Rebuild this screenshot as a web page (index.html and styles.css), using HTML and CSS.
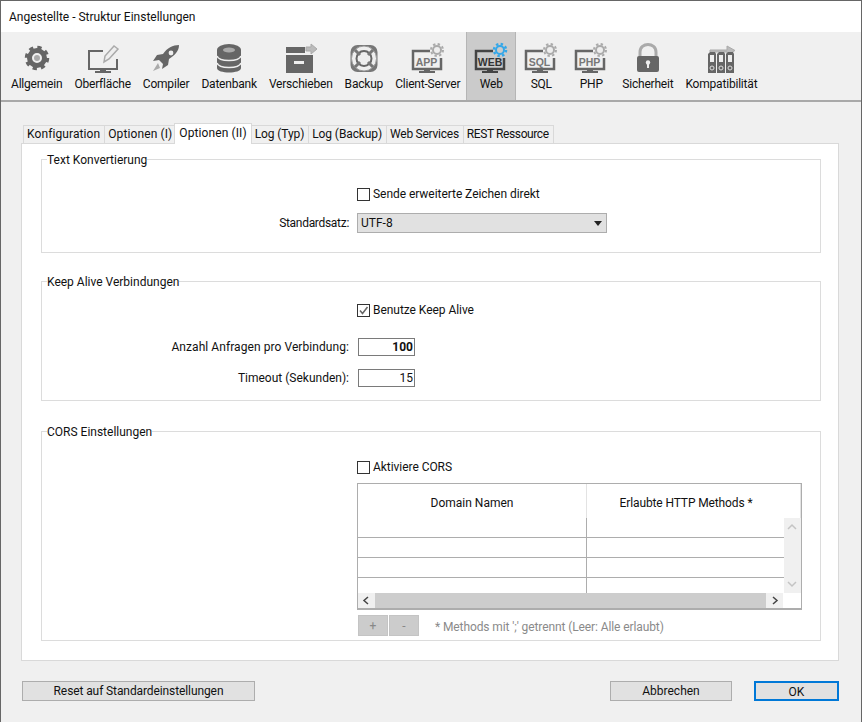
FILE: index.html
```html
<!DOCTYPE html>
<html>
	<head>
		<meta charset="utf-8">
		<title>Angestellte - Struktur Einstellungen</title>
		<link rel="stylesheet" href="styles.css">
	</head>

	<body>
		<div class="window">
			<header class="titlebar">Angestellte - Struktur Einstellungen</header>

			<nav class="toolbar">
				<a class="tool">
					<svg class="tool-icon" viewBox="0 0 40 32">
						<circle cx="20" cy="16" r="7.500" fill="none" stroke="#666" stroke-width="5"/>
						<circle cx="20" cy="16" r="10.500" fill="none" stroke="#666" stroke-width="3.500" stroke-dasharray="4.200 4.050"/>
						<circle cx="20" cy="16" r="3" fill="#aaa"/>
					</svg>
					Allgemein
				</a>
				<a class="tool">
					<svg class="tool-icon" viewBox="0 0 40 32">
						<path d="M20 9H6v18h28V17" fill="none" stroke="#666" stroke-width="2"/>
						<path d="M17 27h6v2h5v2H12v-2h5z" fill="#666"/>
						<path d="M21 20l1-6L31 4l4 3-9 10z" fill="#eee" stroke="#aaa" stroke-width="1.500"/>
					</svg>
					Oberfläche
				</a>
				<a class="tool">
					<svg class="tool-icon" viewBox="0 0 40 32">
						<path d="M33 3c-6 0-12 3-16 9l-6 1-4 6 6-1 4 4-1 5 6-4 1-6c6-4 10-8 10-14z" fill="#666"/>
						<circle cx="25" cy="11" r="2.400" fill="#eee"/>
						<path d="M12 21l-5 8 7-3z" fill="#aaa"/>
					</svg>
					Compiler
				</a>
				<a class="tool">
					<svg class="tool-icon" viewBox="0 0 40 32">
						<path d="M8 8v18c0 6 24 6 24 0V8z" fill="#666"/>
						<ellipse cx="20" cy="8" rx="12" ry="6" fill="#666"/>
						<ellipse cx="20" cy="8" rx="6" ry="2.500" fill="#aaa"/>
						<path d="M8 14c2 6 22 6 24 0M8 21c2 6 22 6 24 0" fill="none" stroke="#eee" stroke-width="1.500"/>
					</svg>
					Datenbank
				</a>
				<a class="tool">
					<svg class="tool-icon" viewBox="0 0 40 32">
						<path d="M5 5h19v6H5zM5 13h27v18H5z" fill="#666"/>
						<path d="M13 19h10v3H13z" fill="#eee"/>
						<path d="M25 5h5V2l6 5-6 5V9h-5z" fill="#bbb" stroke="#aaa"/>
					</svg>
					Verschieben
				</a>
				<a class="tool">
					<svg class="tool-icon" viewBox="0 0 40 32">
						<rect x="6.500" y="3" width="27" height="27" rx="7" fill="#777"/>
						<circle cx="20" cy="16.500" r="12.500" fill="#eee" stroke="#999"/>
						<circle cx="20" cy="16.500" r="7.500" fill="#eee" stroke="#666" stroke-width="2"/>
						<path d="M11 8l5 5M29 8l-5 5M11 25l5-5M29 25l-5-5" stroke="#777" stroke-width="3"/>
					</svg>
					Backup
				</a>
				<a class="tool">
					<svg class="tool-icon" viewBox="0 0 40 32">
						<path d="M22 9H5v18h28V16" fill="none" stroke="#666" stroke-width="2.500"/>
						<path d="M16 27h6v2h5v2H11v-2h5z" fill="#666"/>
						<circle cx="29" cy="8" r="4" fill="#eee" stroke="#aaa" stroke-width="2"/>
						<circle cx="29" cy="8" r="6" fill="none" stroke="#aaa" stroke-width="2" stroke-dasharray="2.400 2.300"/>
						<text class="badge-text" x="18.500" y="24">APP</text>
					</svg>
					Client-Server
				</a>
				<a class="tool tool-active">
					<svg class="tool-icon" viewBox="0 0 40 32">
						<path d="M22 9H5v18h28V16" fill="none" stroke="#444" stroke-width="2.500"/>
						<path d="M16 27h6v2h5v2H11v-2h5z" fill="#444"/>
						<text class="badge-text badge-dark" x="19" y="24">WEB</text>
						<circle cx="29" cy="8" r="4" fill="#cbcbcb" stroke="#35a7e8" stroke-width="2"/>
						<circle cx="29" cy="8" r="6" fill="none" stroke="#35a7e8" stroke-width="2.500" stroke-dasharray="2.400 2.300"/>
					</svg>
					Web
				</a>
				<a class="tool">
					<svg class="tool-icon" viewBox="0 0 40 32">
						<path d="M22 9H5v18h28V16" fill="none" stroke="#666" stroke-width="2.500"/>
						<path d="M16 27h6v2h5v2H11v-2h5z" fill="#666"/>
						<circle cx="29" cy="8" r="4" fill="#eee" stroke="#aaa" stroke-width="2"/>
						<circle cx="29" cy="8" r="6" fill="none" stroke="#aaa" stroke-width="2" stroke-dasharray="2.400 2.300"/>
						<text class="badge-text" x="18.500" y="24">SQL</text>
					</svg>
					SQL
				</a>
				<a class="tool">
					<svg class="tool-icon" viewBox="0 0 40 32">
						<path d="M22 9H5v18h28V16" fill="none" stroke="#666" stroke-width="2.500"/>
						<path d="M16 27h6v2h5v2H11v-2h5z" fill="#666"/>
						<circle cx="29" cy="8" r="4" fill="#eee" stroke="#aaa" stroke-width="2"/>
						<circle cx="29" cy="8" r="6" fill="none" stroke="#aaa" stroke-width="2" stroke-dasharray="2.400 2.300"/>
						<text class="badge-text" x="18.500" y="24">PHP</text>
					</svg>
					PHP
				</a>
				<a class="tool">
					<svg class="tool-icon" viewBox="0 0 40 32">
						<path d="M12 15V10c0-10 16-10 16 0v5" fill="none" stroke="#aaa" stroke-width="3"/>
						<rect x="9" y="14" width="22" height="16" rx="2" fill="#666"/>
						<circle cx="20" cy="20.500" r="2.200" fill="#eee"/>
						<rect x="19" y="21" width="2" height="5" fill="#eee"/>
					</svg>
					Sicherheit
				</a>
				<a class="tool">
					<svg class="tool-icon" viewBox="0 0 40 32">
						<path d="M9 8h17V4l8 4.500-8 4.500v-3H9z" fill="#bbb" stroke="#aaa"/>
						<path d="M7 12l2-2h5l1 2v19H7zM16 12l2-2h5l1 2v19h-8zM25 12l2-2h5l1 2v19h-8z" fill="#666"/>
						<path d="M9 13h4v7H9zM18 13h4v7h-4zM27 13h4v7h-4z" fill="#eee"/>
						<circle cx="11" cy="26" r="2" fill="none" stroke="#ddd"/>
						<circle cx="20" cy="26" r="2" fill="none" stroke="#ddd"/>
						<circle cx="29" cy="26" r="2" fill="none" stroke="#ddd"/>
					</svg>
					Kompatibilität
				</a>
			</nav>

			<main class="content">
				<ul class="tabs">
					<li class="tab tab-first tab-wide">Konfiguration</li>
					<li class="tab tab-wide">Optionen (I)</li>
					<li class="tab tab-active tab-wide">Optionen (II)</li>
					<li class="tab tab-narrow">Log (Typ)</li>
					<li class="tab tab-narrow">Log (Backup)</li>
					<li class="tab tab-web">Web Services</li>
					<li class="tab tab-rest">REST Ressource</li>
				</ul>

				<section class="panel">
					<fieldset class="group group-text">
						<legend>Text Konvertierung</legend>
						<div class="form-row row-check">
							<span></span>
							<label class="check"><span class="check-box"></span>Sende erweiterte Zeichen direkt</label>
						</div>
						<div class="form-row row-select">
							<span class="form-label label-tight">Standardsatz:</span>
							<div class="select">UTF-8<span class="select-arrow"></span></div>
						</div>
					</fieldset>

					<fieldset class="group group-alive">
						<legend>Keep Alive Verbindungen</legend>
						<div class="form-row row-check">
							<span></span>
							<label class="check">
								<span class="check-box">
									<svg viewBox="0 0 11 11"><path d="M2 5.500l2.500 3L9.500 2" fill="none" stroke="#666" stroke-width="1.500"/></svg>
								</span>
								Benutze Keep Alive
							</label>
						</div>
						<div class="form-row row-number">
							<span class="form-label label-wide">Anzahl Anfragen pro Verbindung:</span>
							<div class="number number-strong">100</div>
						</div>
						<div class="form-row row-number">
							<span class="form-label">Timeout (Sekunden):</span>
							<div class="number">15</div>
						</div>
					</fieldset>

					<fieldset class="group group-cors">
						<legend>CORS Einstellungen</legend>
						<div class="form-row row-check">
							<span></span>
							<label class="check"><span class="check-box"></span>Aktiviere CORS</label>
						</div>
						<div class="form-row">
							<span></span>
							<div>
								<div class="grid">
									<div class="grid-head">
										<div class="grid-title">Domain Namen</div>
										<div class="grid-title grid-title-last">Erlaubte HTTP Methods *</div>
									</div>
									<div class="grid-middle">
										<div class="grid-rows">
											<div class="grid-row"><span></span><span></span></div>
											<div class="grid-row"><span></span><span></span></div>
											<div class="grid-row"><span></span><span></span></div>
											<div class="grid-row grid-row-last"><span></span><span></span></div>
										</div>
										<div class="vscroll">
											<svg viewBox="0 0 16 10"><path d="M4 7l4-4 4 4" fill="none" stroke="#c4c4c4" stroke-width="1.500"/></svg>
											<svg viewBox="0 0 16 10"><path d="M4 3l4 4 4-4" fill="none" stroke="#c4c4c4" stroke-width="1.500"/></svg>
										</div>
									</div>
									<div class="hscroll">
										<svg class="hscroll-arrow" viewBox="0 0 17 15"><path d="M10 4l-4 3.500 4 3.500" fill="none" stroke="#444" stroke-width="1.500"/></svg>
										<div class="hscroll-thumb"></div>
										<svg class="hscroll-arrow" viewBox="0 0 17 15"><path d="M7 4l4 3.500-4 3.500" fill="none" stroke="#444" stroke-width="1.500"/></svg>
										<div class="hscroll-corner"></div>
									</div>
								</div>
								<div class="grid-actions">
									<button class="mini-btn">+</button>
									<button class="mini-btn">-</button>
									<span class="grid-note">* Methods mit ';' getrennt (Leer: Alle erlaubt)</span>
								</div>
							</div>
						</div>
					</fieldset>
				</section>

				<footer class="actions">
					<button class="btn btn-reset">Reset auf Standardeinstellungen</button>
					<button class="btn btn-cancel">Abbrechen</button>
					<button class="btn btn-ok">OK</button>
				</footer>
			</main>
		</div>
	</body>
</html>
```

FILE: styles.css
```css
* {
	box-sizing: border-box;
}
html,
body {
	margin: 0;
	height: 100%;
	overflow: hidden;
}
body {
	font-family: Roboto, "Noto Sans", sans-serif;
	font-size: 12px;
	color: #111;
}
button {
	font: inherit;
	color: inherit;
}

.window {
	display: flex;
	flex-direction: column;
	height: 722px;
	background: #f0f0f0;
	border: 1px solid #666;
	border-bottom: 0;
}
.titlebar {
	height: 31px;
	padding: 0 8px;
	line-height: 32px;
	background: #fff;
	flex: none;
}

/* top toolbar */
.toolbar {
	display: flex;
	height: 70px;
	padding-left: 4px;
	border-bottom: 2px solid #a9a9a9;
	flex: none;
}
.tool {
	display: flex;
	flex-direction: column;
	align-items: center;
	min-width: 50px;
	padding: 10px 6px 0;
	line-height: 20px;
	letter-spacing: -0.2px;
	white-space: nowrap;
}
.tool-active {
	background: #cbcbcb;
	border: solid #b5b5b5;
	border-width: 0 1px;
	padding: 10px 5px 0;
}
.tool-icon {
	width: 40px;
	height: 32px;
	margin: 0 -6px;
	flex: none;
}
.badge-text {
	font-family: "Liberation Sans", sans-serif;
	font-size: 10.500px;
	font-weight: 700;
	letter-spacing: 0;
	fill: #777;
	text-anchor: middle;
}
.badge-dark {
	fill: #333;
}

/* tabs */
.content {
	display: flex;
	flex-direction: column;
	flex: 1;
	padding: 21px 22px 0 20px;
}
.tabs {
	display: flex;
	align-items: flex-end;
	height: 20px;
	margin: 0;
	padding: 0 0 0 2px;
	list-style: none;
	position: relative;
	z-index: 1;
}
.tab {
	height: 18px;
	padding: 0 4px 0 3px;
	line-height: 17px;
	border: 1px solid #d9d9d9;
	border-width: 1px 1px 0 0;
	background: #f0f0f0;
	white-space: nowrap;
}
.tab-first {
	border-left-width: 1px;
}
.tab-active {
	height: 21px;
	margin: 0 0 -1px -3px;
	padding: 0 4px;
	line-height: 18px;
	background: #fff;
	border-width: 1px 1px 0 1px;
}
.tab-wide {
	letter-spacing: 0.1px;
}
.tab-narrow {
	letter-spacing: -0.1px;
}
.tab-web {
	letter-spacing: -0.25px;
}
.tab-rest {
	letter-spacing: -0.4px;
}

/* settings panel */
.panel {
	height: 518px;
	padding: 6px 17px 0 19px;
	background: #fff;
	border: 1px solid #d9d9d9;
}
.group {
	margin: 0;
	padding: 0;
	border: 1px solid #dcdcdc;
}
.group legend {
	margin-left: 5px;
	padding: 2px 0 0;
	line-height: 16px;
}
.group-text {
	height: 103px;
}
.group-alive {
	height: 129px;
	margin-top: 19px;
}
.group-cors {
	height: 219px;
	margin-top: 21px;
}
.form-row {
	display: grid;
	grid-template-columns: 307px 1fr;
	column-gap: 8px;
	align-items: center;
}
.form-label {
	text-align: right;
}
.label-tight {
	letter-spacing: -0.3px;
}
.label-wide {
	letter-spacing: 0.07px;
}
.row-check {
	height: 18px;
}
.group-text .row-check {
	margin-top: 17px;
}
.group-alive .row-check {
	margin-top: 11px;
}
.group-cors .row-check {
	margin-top: 18px;
}
.row-select {
	margin-top: 10px;
}
.row-number {
	margin-top: 13px;
}
.group-alive .row-check + .row-number {
	margin-top: 19px;
}
.check {
	display: flex;
	align-items: center;
	column-gap: 3px;
	letter-spacing: -0.05px;
}
.check-box {
	display: block;
	width: 13px;
	height: 13px;
	background: #fff;
	border: 1px solid #333;
	flex: none;
}
.check-box svg {
	display: block;
}
.select {
	position: relative;
	width: 250px;
	height: 20px;
	padding-left: 3px;
	line-height: 18px;
	background: #e1e1e1;
	border: 1px solid #adadad;
}
.select-arrow {
	position: absolute;
	right: 4px;
	top: 7px;
	border: 4px solid transparent;
	border-top: 5px solid #222;
	border-bottom: 0;
}
.number {
	width: 57px;
	height: 18px;
	margin-left: 1px;
	padding-right: 1px;
	line-height: 16px;
	text-align: right;
	border: 1px solid #7a7a7a;
}
.number-strong {
	font-weight: 700;
}

/* domain table */
.grid {
	width: 445px;
	height: 127px;
	margin-top: 7px;
	border: 1px solid #adadad;
	border-bottom-width: 2px;
}
.grid-head {
	display: grid;
	grid-template-columns: 229px 1fr;
	height: 34px;
}
.grid-title {
	padding-top: 12px;
	text-align: center;
	border-right: 1px solid #e3e3e3;
}
.grid-title-last {
	padding-right: 15px;
	letter-spacing: -0.12px;
}
.grid-middle {
	display: flex;
	height: 75px;
}
.grid-rows {
	width: 426px;
}
.grid-row {
	display: grid;
	grid-template-columns: 229px 1fr;
	height: 20px;
	border-bottom: 1px solid #adadad;
}
.grid-row-last {
	height: 15px;
	border-bottom: 0;
}
.grid-row span:first-child {
	border-right: 1px solid #adadad;
}
.vscroll {
	display: flex;
	flex-direction: column;
	justify-content: space-between;
	width: 17px;
	padding: 4px 0;
	background: #f0f0f0;
}
.vscroll svg {
	display: block;
	width: 16px;
	height: 10px;
}
.hscroll {
	display: flex;
	height: 15px;
	background: #f0f0f0;
}
.hscroll-arrow {
	width: 17px;
	height: 15px;
	flex: none;
}
.hscroll-thumb {
	width: 391px;
	background: #cdcdcd;
}
.hscroll-corner {
	flex: 1;
	background: #fff;
}
.grid-actions {
	display: flex;
	align-items: center;
	margin-top: 5px;
	margin-left: 1px;
	column-gap: 1px;
}
.mini-btn {
	width: 30px;
	height: 21px;
	padding: 0;
	color: #888;
	background: #ccc;
	border: 1px solid #c4c4c4;
}
.grid-note {
	margin-left: 15px;
	padding-top: 3px;
	color: #8a8a8a;
	letter-spacing: -0.1px;
}

/* footer buttons */
.actions {
	display: flex;
	margin-top: 20px;
	padding-left: 1px;
}
.btn {
	height: 20px;
	padding: 1px 0 0;
	line-height: 17px;
	background: #e1e1e1;
	border: 1px solid #adadad;
}
.btn-reset {
	width: 233px;
	margin-right: auto;
	letter-spacing: -0.1px;
}
.btn-cancel {
	width: 122px;
}
.btn-ok {
	width: 85px;
	margin-left: 22px;
	border: 2px solid #0078d7;
}
```
